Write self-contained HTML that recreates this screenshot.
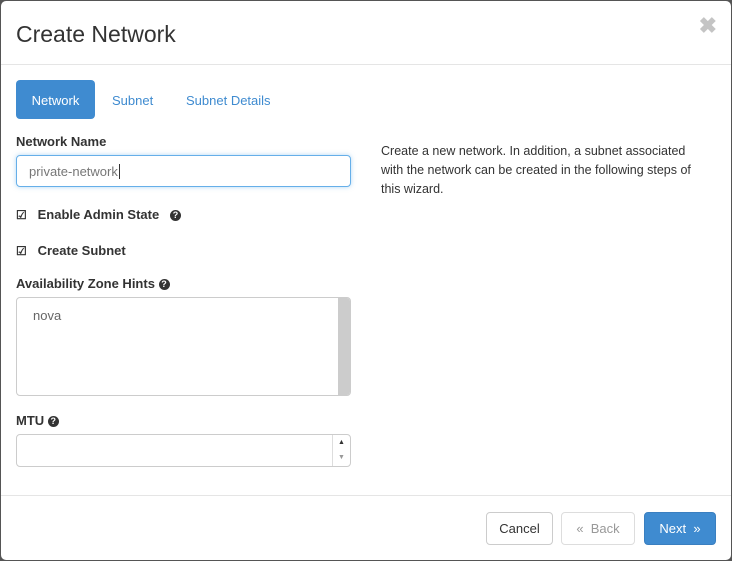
<!DOCTYPE html>
<html><head><style>
*{box-sizing:border-box;margin:0;padding:0}
body{width:732px;height:561px;background:#555;font-family:"Liberation Sans",sans-serif;color:#333;overflow:hidden;position:relative}
.m{position:absolute;left:1px;top:1px;width:730px;height:559px;background:#fff;border-radius:5px}
.h{height:64px;border-bottom:1px solid #e5e5e5;position:relative}
.h h4{position:absolute;left:15px;top:20px;font-size:23px;font-weight:normal;color:#333}
.x{position:absolute;right:14px;top:12px;font-size:22px;color:#c4c4c4;font-weight:bold}
.tab{position:absolute;top:79px;height:39px;font-size:13px;line-height:41px;color:#3f8bd0}
.lbl{position:absolute;left:15px;font-size:13px;font-weight:bold}
.q{display:inline-block;width:11px;height:11px;border-radius:50%;background:#333;color:#fff;font-size:9px;line-height:11px;text-align:center;vertical-align:1px}
.inp{position:absolute;left:15px;width:335px;border:1px solid #ccc;border-radius:4px}
.cb{position:absolute;left:15px;font-size:13px;font-weight:bold}
.btn{position:absolute;top:511px;height:33px;border-radius:4px;font-size:13px;line-height:31px;text-align:center}
</style></head><body>
<div class="m">
<div class="h"><h4>Create Network</h4><div class="x">✖</div></div>
<div class="tab" style="left:15px;width:79px;background:#3f8bd0;color:#fff;border-radius:4px;text-align:center">Network</div>
<div class="tab" style="left:111px">Subnet</div>
<div class="tab" style="left:185px">Subnet Details</div>
<div class="lbl" style="top:133px">Network Name</div>
<div class="inp" style="top:154px;height:32px;border-color:#66afe9;box-shadow:0 0 5px rgba(102,175,233,.5);font-size:13px;color:#777;padding:8px 12px">private-network<span style="border-left:1px solid #333;margin-left:1px"></span></div>
<div class="cb" style="top:206px"><span style="font-size:12px">☑</span>&nbsp;&nbsp;&nbsp;Enable Admin State&nbsp;&nbsp; <span class="q">?</span></div>
<div class="cb" style="top:242px"><span style="font-size:12px">☑</span>&nbsp;&nbsp;&nbsp;Create Subnet</div>
<div class="lbl" style="top:275px">Availability Zone Hints <span class="q">?</span></div>
<div class="inp" style="top:296px;height:99px;font-size:13px;color:#666;padding:10px 16px;overflow:hidden">nova<div style="position:absolute;right:0;top:0;width:12px;height:100%;background:#ccc"></div></div>
<div class="lbl" style="top:412px">MTU <span class="q">?</span></div>
<div class="inp" style="top:433px;height:33px"><div style="position:absolute;right:0;top:0;width:18px;height:100%;border-left:1px solid #ddd;font-size:7px;text-align:center;line-height:15px;color:#333">▲<br><span style="color:#999">▼</span></div></div>
<div style="position:absolute;left:380px;top:141px;width:322px;font-size:12.5px;line-height:19px">Create a new network. In addition, a subnet associated with the network can be created in the following steps of this wizard.</div>
<div style="position:absolute;left:0;top:494px;width:730px;border-top:1px solid #e5e5e5"></div>
<div class="btn" style="left:485px;width:67px;border:1px solid #ccc">Cancel</div>
<div class="btn" style="left:560px;width:74px;border:1px solid #ddd;color:#999">«&nbsp; Back</div>
<div class="btn" style="left:643px;width:72px;background:#3f8bd0;color:#fff;border:1px solid #3a7fc0">Next &nbsp;»</div>
</div>
</body></html>
